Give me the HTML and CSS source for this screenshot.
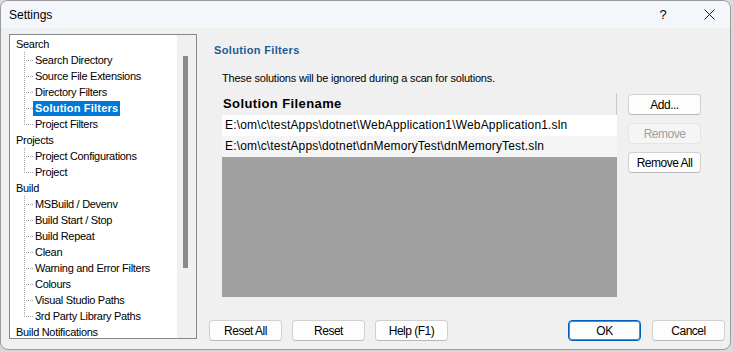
FILE: index.html
```html
<!DOCTYPE html>
<html lang="en">
<head>
    <meta charset="UTF-8">
    <meta name="viewport" content="width=device-width, initial-scale=1.0">
    <link rel="stylesheet" href="styles.css">
    <title>Settings</title>
</head>
<body>
    <div class="window">
        <div class="titlebar">
            <span class="title">Settings</span>
            <span class="help">?</span>
            <span class="close">
                <svg width="11" height="11" viewBox="0 0 11 11">
                    <path d="M0.5 0.5 L10.5 10.5 M10.5 0.5 L0.5 10.5" stroke="#1a1a1a" stroke-width="1" fill="none"/>
                </svg>
            </span>
        </div>

        <div class="main">
            <div class="tree">
                <div class="tree-items">
                    <div class="node">Search</div>
                    <div class="leaf"><span>Search Directory</span></div>
                    <div class="leaf"><span>Source File Extensions</span></div>
                    <div class="leaf"><span>Directory Filters</span></div>
                    <div class="leaf"><span class="selected">Solution Filters</span></div>
                    <div class="leaf last"><span>Project Filters</span></div>
                    <div class="node">Projects</div>
                    <div class="leaf"><span>Project Configurations</span></div>
                    <div class="leaf last"><span>Project</span></div>
                    <div class="node">Build</div>
                    <div class="leaf"><span>MSBuild / Devenv</span></div>
                    <div class="leaf"><span>Build Start / Stop</span></div>
                    <div class="leaf"><span>Build Repeat</span></div>
                    <div class="leaf"><span>Clean</span></div>
                    <div class="leaf"><span>Warning and Error Filters</span></div>
                    <div class="leaf"><span>Colours</span></div>
                    <div class="leaf"><span>Visual Studio Paths</span></div>
                    <div class="leaf last"><span>3rd Party Library Paths</span></div>
                    <div class="node">Build Notifications</div>
                </div>
                <div class="scroll"><div class="thumb"></div></div>
            </div>

            <div class="panel">
                <h2 class="heading">Solution Filters</h2>
                <p class="desc">These solutions will be ignored during a scan for solutions.</p>

                <div class="filters">
                    <div class="grid">
                        <div class="grid-head">Solution Filename</div>
                        <div class="grid-row">E:\om\c\testApps\dotnet\WebApplication1\WebApplication1.sln</div>
                        <div class="grid-row alt">E:\om\c\testApps\dotnet\dnMemoryTest\dnMemoryTest.sln</div>
                        <div class="grid-empty"></div>
                    </div>
                    <div class="side-buttons">
                        <button type="button">Add...</button>
                        <button type="button" disabled>Remove</button>
                        <button type="button">Remove All</button>
                    </div>
                </div>

                <div class="footer">
                    <div class="footer-left">
                        <button type="button">Reset All</button>
                        <button type="button">Reset</button>
                        <button type="button">Help (F1)</button>
                    </div>
                    <div class="footer-right">
                        <button type="button" class="default">OK</button>
                        <button type="button">Cancel</button>
                    </div>
                </div>
            </div>
        </div>
    </div>
</body>
</html>
```

FILE: styles.css
```css
* {
    margin: 0;
    padding: 0;
    box-sizing: border-box;
    font-family: "Liberation Sans", Arial, sans-serif;
}

body {
    background-color: #d9d9d9;
    width: 733px;
    height: 352px;
    overflow: hidden;
}

.window {
    width: 731px;
    height: 350px;
    background-color: #f0f0f0;
    border: 1px solid #9a9a9a;
    border-radius: 8px;
    overflow: hidden;
}

.titlebar {
    height: 27px;
    background-color: #f3f6fb;
    display: flex;
    align-items: center;
    padding-left: 8px;
    font-size: 12px;
    color: #000;
}

.title {
    flex: 1;
}

.help {
    width: 50px;
    text-align: center;
    font-size: 13px;
}

.close {
    width: 42px;
    display: flex;
    justify-content: center;
}

.main {
    display: flex;
    padding: 6px 5px 0 8px;
}

/* tree on the left */
.tree {
    width: 188px;
    height: 305px;
    border: 1px solid #828790;
    background-color: #fff;
    display: flex;
    overflow: hidden;
}

.tree-items {
    flex: 1;
    padding-top: 1px;
    font-size: 11px;
    letter-spacing: -0.3px;
    color: #000;
}

.node,
.leaf {
    height: 16px;
    line-height: 16px;
    white-space: nowrap;
}

.node {
    padding-left: 6px;
}

.leaf {
    display: flex;
    align-items: center;
    background: repeating-linear-gradient(to bottom, #a0a0a0 0 1px, transparent 1px 2px) 14px 0 / 1px 100% no-repeat;
}

.leaf.last {
    background-size: 1px 9px;
}

.leaf::before {
    content: "";
    width: 9px;
    height: 1px;
    margin-left: 14px;
    background: repeating-linear-gradient(to right, #a0a0a0 0 1px, transparent 1px 2px);
}

.leaf span {
    padding: 0 2px;
    line-height: 15px;
}

.leaf .selected {
    background-color: #0078d7;
    color: #fff;
    font-weight: bold;
    letter-spacing: 0.2px;
}

.scroll {
    width: 19px;
    background-color: #f0f0f0;
    padding: 21px 0 0 6px;
}

.thumb {
    width: 5px;
    height: 212px;
    background-color: #8a8a8a;
}

/* right panel */
.panel {
    flex: 1;
    display: flex;
    flex-direction: column;
    padding-left: 12px;
}

.heading {
    font-size: 11px;
    font-weight: bold;
    color: #1c5b93;
    line-height: 13px;
    letter-spacing: 0.35px;
    margin: 10px 0 0 5px;
}

.desc {
    font-size: 11px;
    line-height: 13px;
    letter-spacing: -0.2px;
    margin: 15px 0 0 13px;
    color: #000;
}

.filters {
    display: flex;
    margin: 8px 0 0 13px;
}

.grid {
    width: 395px;
    height: 204px;
    display: flex;
    flex-direction: column;
    background-color: #a0a0a0;
}

.grid-head {
    height: 22px;
    line-height: 21px;
    padding-left: 1px;
    font-size: 13px;
    font-weight: bold;
    letter-spacing: 0.4px;
    background-color: #f0f0f0;
    border-right: 1px solid #c8c8c8;
}

.grid-row {
    height: 21px;
    line-height: 21px;
    padding-left: 3px;
    font-size: 12px;
    letter-spacing: 0.17px;
    background-color: #fff;
    white-space: nowrap;
}

.grid-row.alt {
    background-color: #f5f5f5;
}

.side-buttons {
    display: flex;
    flex-direction: column;
    gap: 8px;
    margin: 1px 0 0 11px;
}

button {
    width: 73px;
    height: 21px;
    font-size: 12px;
    letter-spacing: -0.5px;
    color: #000;
    background-color: #fdfdfd;
    border: 1px solid #d0d0d0;
    border-bottom-color: #b8b8b8;
    border-radius: 4px;
}

button:disabled {
    background-color: #f5f5f5;
    border-color: #e5e5e5;
    color: #a0a0a0;
}

button.default {
    border: 1px solid #005fb8;
    box-shadow: inset 0 0 0 1px #4a90d0;
}

.footer {
    display: flex;
    justify-content: space-between;
    margin-top: 23px;
}

.footer-left {
    display: flex;
    gap: 10px;
}

.footer-right {
    display: flex;
    gap: 11px;
}
```
